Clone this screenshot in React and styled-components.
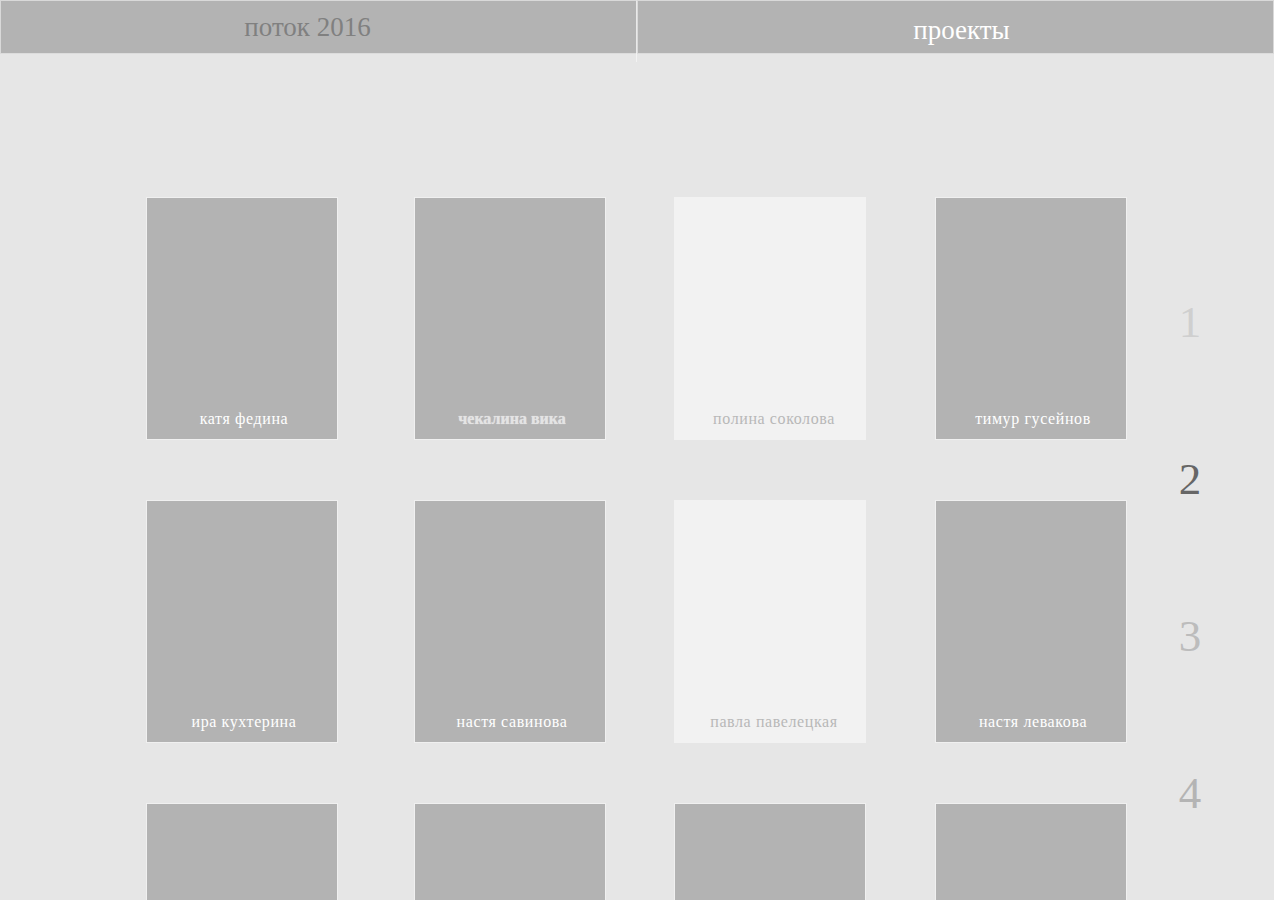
import React from 'react'
import styled, { createGlobalStyle } from 'styled-components'

const GlobalStyle = createGlobalStyle`
  html, body {
    margin: 0;
    padding: 0;
    background: #e6e6e6;
    overflow: hidden;
  }
  body {
    font-family: 'Liberation Serif', 'DejaVu Serif', serif;
  }
`

const students = [
  [
    { name: 'катя федина' },
    { name: 'чекалина вика', active: true },
    { name: 'полина соколова', empty: true },
    { name: 'тимур гусейнов' },
  ],
  [
    { name: 'ира кухтерина' },
    { name: 'настя савинова' },
    { name: 'павла павелецкая', empty: true },
    { name: 'настя левакова' },
  ],
  [{ name: '' }, { name: '' }, { name: '' }, { name: '' }],
]

const pages = [
  { n: 1, tone: '#cfcfcf' },
  { n: 2, tone: '#666666' },
  { n: 3, tone: '#bcbcbc' },
  { n: 4, tone: '#b4b4b4' },
]

const App = () => {
  return (
    <Page>
      <GlobalStyle />
      <Header>
        <Tab $divider>
          <TabLabel $color='#808080' $shift='-11px' $top='0px'>поток 2016</TabLabel>
        </Tab>
        <Tab>
          <TabLabel $color='#ffffff' $shift='6px' $top='3px'>проекты</TabLabel>
        </Tab>
      </Header>
      <Main>
        <Grid>
          {students.flat().map((s, i) => (
            <Card key={i} $empty={s.empty}>
              <Name $empty={s.empty} $active={s.active}>{s.name}</Name>
            </Card>
          ))}
        </Grid>
        <Pager>
          {pages.map((p) => (
            <PageNum key={p.n} $tone={p.tone}>{p.n}</PageNum>
          ))}
        </Pager>
      </Main>
    </Page>
  )
}

const Page = styled.div`
  min-height: 900px;
  background: #e6e6e6;
`

const Header = styled.header`
  display: grid;
  grid-template-columns: 637px 637px;
  height: 54px;
`

const Tab = styled.div`
  position: relative;
  display: flex;
  align-items: center;
  justify-content: center;
  background: #b3b3b3;
  border-top: 1px solid #d9d9d9;
  border-bottom: 1px solid #dcdcdc;
  border-left: 1px solid #d9d9d9;
  border-right: 1px solid ${({ $divider }) => ($divider ? '#e9e9e9' : '#d9d9d9')};
  box-sizing: border-box;

  ${({ $divider }) =>
    $divider &&
    `
    &::after {
      content: '';
      position: absolute;
      right: -1px;
      bottom: -9px;
      width: 1px;
      height: 9px;
      background: #f2f2f2;
    }
  `}
`

const TabLabel = styled.span`
  font-size: 27px;
  color: ${({ $color }) => $color};
  transform: translate(${({ $shift }) => $shift}, ${({ $top }) => $top});
  line-height: 1;
`

const Main = styled.main`
  display: flex;
  align-items: flex-start;
  padding: 143px 0 0 146px;
`

const Grid = styled.div`
  display: grid;
  grid-template-columns: 268px 260px 261px 192px;
  grid-auto-rows: 243px;
  row-gap: 60px;
`

const Card = styled.div`
  width: 192px;
  height: 243px;
  box-sizing: border-box;
  border: 1px solid ${({ $empty }) => ($empty ? '#f2f2f2' : '#f0f0f0')};
  background: ${({ $empty }) => ($empty ? '#f2f2f2' : '#b3b3b3')};
  display: flex;
  align-items: flex-end;
  justify-content: center;
  padding-bottom: 12px;
`

const Name = styled.span`
  font-size: 16px;
  letter-spacing: ${({ $active }) => ($active ? '0' : '0.6px')};
  line-height: 1;
  white-space: nowrap;
  color: ${({ $empty, $active }) => ($empty ? '#b8b8b8' : $active ? '#e4e4e4' : '#ffffff')};
  font-weight: ${({ $active }) => ($active ? 700 : 400)};
  text-shadow: ${({ $active }) => ($active ? '0 0 1px rgba(255,255,255,0.6)' : 'none')};
  transform: translateX(${({ $empty }) => ($empty ? '4px' : '2px')});
`

const Pager = styled.nav`
  display: flex;
  flex-direction: column;
  align-items: center;
  width: 40px;
  margin: 47px 0 0 43px;
`

const PageNum = styled.span`
  font-size: 45px;
  line-height: 157px;
  height: 157px;
  color: ${({ $tone }) => $tone};
`

export default App
